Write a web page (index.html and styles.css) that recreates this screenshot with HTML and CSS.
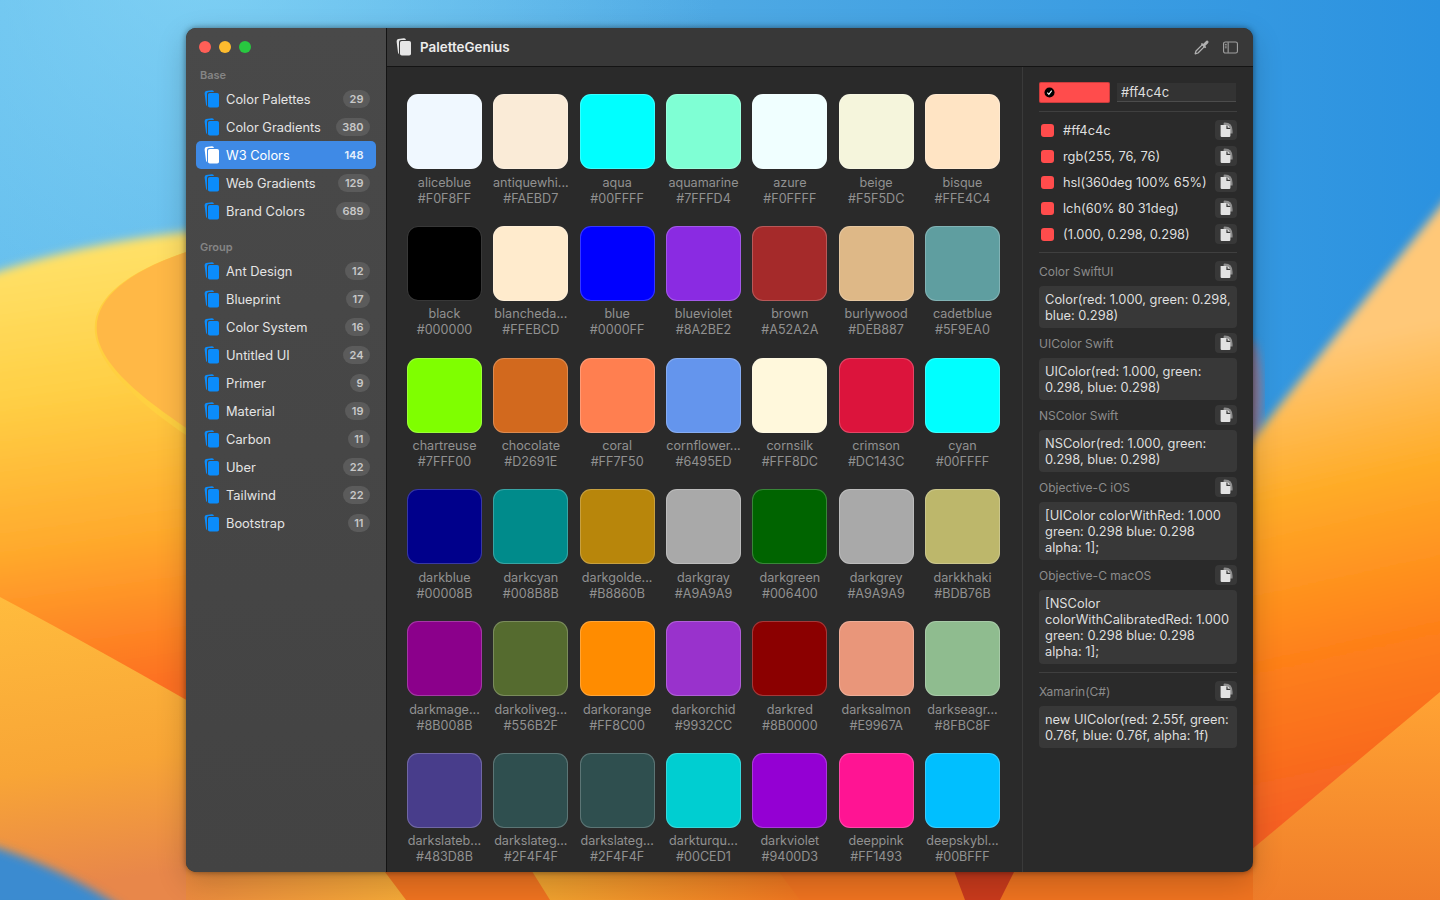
FILE: index.html
```html
<!DOCTYPE html>
<html lang="en">
<head>
    <meta charset="UTF-8">
    <meta name="viewport" content="width=device-width, initial-scale=1.0">
    <title>PaletteGenius</title>
    <link rel="stylesheet" href="styles.css">
</head>
<body>
    <!-- wallpaper -->
    <svg class="wallpaper" viewBox="0 0 1440 900" aria-hidden="true">
        <defs>
            <linearGradient id="sky" x1="0" y1="0" x2="1" y2="0">
                <stop offset="0" stop-color="#5fbaec"/>
                <stop offset="0.5" stop-color="#4ea9e4"/>
                <stop offset="1" stop-color="#2b92e0"/>
            </linearGradient>
            <radialGradient id="skyTop" gradientUnits="userSpaceOnUse" cx="200" cy="-60" r="520">
                <stop offset="0" stop-color="#8fdcf8" stop-opacity="0.7"/>
                <stop offset="1" stop-color="#8fdcf8" stop-opacity="0"/>
            </radialGradient>
            <linearGradient id="duneLeft" gradientUnits="userSpaceOnUse" x1="0" y1="270" x2="60" y2="700">
                <stop offset="0" stop-color="#ffe066"/>
                <stop offset="0.3" stop-color="#ffcf45"/>
                <stop offset="0.65" stop-color="#ffa92c"/>
                <stop offset="1" stop-color="#fd6f20"/>
            </linearGradient>
            <linearGradient id="bandLeft" gradientUnits="userSpaceOnUse" x1="0" y1="600" x2="40" y2="890">
                <stop offset="0" stop-color="#ffbb3d"/>
                <stop offset="0.6" stop-color="#f8a536"/>
                <stop offset="1" stop-color="#e8874a"/>
            </linearGradient>
            <linearGradient id="duneRight" gradientUnits="userSpaceOnUse" x1="1300" y1="350" x2="1400" y2="800">
                <stop offset="0" stop-color="#ffc878"/>
                <stop offset="0.3" stop-color="#ffac28"/>
                <stop offset="0.65" stop-color="#fe8019"/>
                <stop offset="1" stop-color="#f66022"/>
            </linearGradient>
            <linearGradient id="bandRight" gradientUnits="userSpaceOnUse" x1="1400" y1="700" x2="1400" y2="900">
                <stop offset="0" stop-color="#ffa233"/>
                <stop offset="1" stop-color="#f07d2a"/>
            </linearGradient>
            <linearGradient id="stripA" x1="0" y1="0" x2="1" y2="0">
                <stop offset="0" stop-color="#ea8a3e"/>
                <stop offset="1" stop-color="#f5aa38"/>
            </linearGradient>
            <linearGradient id="stripB" x1="0" y1="0" x2="1" y2="0">
                <stop offset="0" stop-color="#f0a530"/>
                <stop offset="1" stop-color="#ef7620"/>
            </linearGradient>
            <filter id="soft" x="-10%" y="-10%" width="120%" height="120%">
                <feGaussianBlur stdDeviation="5"/>
            </filter>
        </defs>
        <rect width="1440" height="900" fill="url(#sky)"/>
        <rect width="1440" height="500" fill="url(#skyTop)"/>
        <ellipse cx="1250" cy="395" rx="12" ry="55" fill="#b5707a" opacity="0.7" filter="url(#soft)"/>
        <path d="M-20 278 Q90 238 230 228 L230 920 L-20 920 Z" fill="url(#duneLeft)" filter="url(#soft)"/>
        <path d="M230 240 C150 258 90 290 95 333 C100 378 170 428 230 462 Z" fill="#ffd040"/>
        <path d="M230 240 C150 258 92 290 97 333 C102 375 170 418 230 456 Z" fill="#ffb846"/>
        <path d="M0 597 Q100 650 230 725 L230 900 L0 900 Z" fill="url(#bandLeft)"/>
        <path d="M-20 842 Q60 866 125 910 L-20 910 Z" fill="#3a8bd0" filter="url(#soft)"/>
        <path d="M1220 480 Q1340 330 1470 170 L1470 920 L1220 920 Z" fill="url(#duneRight)" filter="url(#soft)"/>
        <path d="M1220 876 L1440 692 L1440 900 L1220 900 Z" fill="url(#bandRight)"/>
        <rect x="186" y="860" width="1067" height="40" fill="#ef7320"/>
        <path d="M186 860 H376 L406 900 H186 Z" fill="url(#stripA)"/>
        <path d="M525 860 H770 L800 900 H550 Z" fill="url(#stripB)"/>
        <path d="M950 860 H1020 L1000 900 H965 Z" fill="#c93a1c"/>
    </svg>

    <!-- shared icons -->
    <svg class="icon-defs" aria-hidden="true">
        <symbol id="cards" viewBox="0 0 16 18">
            <path d="M.6 3.4 Q.5 1.5 2.2 1.1 L7.8 .3 Q9.6 .1 10 2 H5 Q3 2 3 4 V15 Q3 15.7 3.3 16.4 Q2.2 15.9 2 14.6 Z"/>
            <rect x="4" y="3" width="11" height="14.5" rx="1.8"/>
        </symbol>
        <symbol id="copy" viewBox="0 0 14 16">
            <path d="M4.6 3 V1.6 Q4.6 .6 5.8 .6 Q13.6 .6 13.6 9 V11.4 H11 V5 Z" fill="#8d8d8d"/>
            <path d="M1.6 3 H7.4 V7 H11.4 V13.8 Q11.4 15 10.2 15 H2.8 Q1.6 15 1.6 13.8 Z" fill="#e2e2e2"/>
            <path d="M8.6 3 L11.4 5.8 H8.6 Z" fill="#e2e2e2"/>
        </symbol>
    </svg>

    <div class="window">
        <aside class="sidebar">
            <div class="traffic">
                <span class="dot dot-red"></span>
                <span class="dot dot-yellow"></span>
                <span class="dot dot-green"></span>
            </div>
            <div class="side-label">Base</div>
            <ul class="side-list">
                <li class="side-item"><svg class="side-icon"><use href="#cards"/></svg><span class="side-name">Color Palettes</span><span class="badge">29</span></li>
                <li class="side-item"><svg class="side-icon"><use href="#cards"/></svg><span class="side-name">Color Gradients</span><span class="badge">380</span></li>
                <li class="side-item active"><svg class="side-icon"><use href="#cards"/></svg><span class="side-name">W3 Colors</span><span class="badge">148</span></li>
                <li class="side-item"><svg class="side-icon"><use href="#cards"/></svg><span class="side-name">Web Gradients</span><span class="badge">129</span></li>
                <li class="side-item"><svg class="side-icon"><use href="#cards"/></svg><span class="side-name">Brand Colors</span><span class="badge">689</span></li>
            </ul>
            <div class="side-label side-label-group">Group</div>
            <ul class="side-list">
                <li class="side-item"><svg class="side-icon"><use href="#cards"/></svg><span class="side-name">Ant Design</span><span class="badge">12</span></li>
                <li class="side-item"><svg class="side-icon"><use href="#cards"/></svg><span class="side-name">Blueprint</span><span class="badge">17</span></li>
                <li class="side-item"><svg class="side-icon"><use href="#cards"/></svg><span class="side-name">Color System</span><span class="badge">16</span></li>
                <li class="side-item"><svg class="side-icon"><use href="#cards"/></svg><span class="side-name">Untitled UI</span><span class="badge">24</span></li>
                <li class="side-item"><svg class="side-icon"><use href="#cards"/></svg><span class="side-name">Primer</span><span class="badge">9</span></li>
                <li class="side-item"><svg class="side-icon"><use href="#cards"/></svg><span class="side-name">Material</span><span class="badge">19</span></li>
                <li class="side-item"><svg class="side-icon"><use href="#cards"/></svg><span class="side-name">Carbon</span><span class="badge">11</span></li>
                <li class="side-item"><svg class="side-icon"><use href="#cards"/></svg><span class="side-name">Uber</span><span class="badge">22</span></li>
                <li class="side-item"><svg class="side-icon"><use href="#cards"/></svg><span class="side-name">Tailwind</span><span class="badge">22</span></li>
                <li class="side-item"><svg class="side-icon"><use href="#cards"/></svg><span class="side-name">Bootstrap</span><span class="badge">11</span></li>
            </ul>
        </aside>

        <main class="main">
            <header class="toolbar">
                <svg class="title-icon"><use href="#cards"/></svg>
                <span class="title">PaletteGenius</span>
                <div class="toolbar-actions">
                    <svg class="tool-icon" viewBox="0 0 16 16">
                        <path d="M1.2 14.8 L2 12 L8.4 5.6 L10.4 7.6 L4 14 Z" fill="none" stroke="#b0b0b0" stroke-width="1.3" stroke-linejoin="round"/>
                        <path d="M7.6 4 L9.4 4.8 L11.6 2.4 Q13 1 14.2 2 Q15.2 3.2 13.8 4.6 L11.4 6.8 L12.2 8.6 L11 9.2 L7 5.2 Z" fill="#b0b0b0"/>
                    </svg>
                    <svg class="tool-icon tool-icon-wide" viewBox="0 0 16 13">
                        <rect x="0.6" y="0.6" width="14.8" height="11.8" rx="2" fill="none" stroke="#a0a0a0" stroke-width="1.2"/>
                        <path d="M5.5 1 V12" stroke="#a0a0a0" stroke-width="1.2"/>
                        <path d="M2 3.2 H4 M2 5 H4 M2 6.8 H4" stroke="#a0a0a0"/>
                    </svg>
                </div>
            </header>

            <div class="panes">
                <section class="colors">
                    <div class="color-card"><div class="swatch" style="background:#F0F8FF"></div><div class="color-name">aliceblue</div><div class="color-hex">#F0F8FF</div></div>
                    <div class="color-card"><div class="swatch" style="background:#FAEBD7"></div><div class="color-name">antiquewhi...</div><div class="color-hex">#FAEBD7</div></div>
                    <div class="color-card"><div class="swatch" style="background:#00FFFF"></div><div class="color-name">aqua</div><div class="color-hex">#00FFFF</div></div>
                    <div class="color-card"><div class="swatch" style="background:#7FFFD4"></div><div class="color-name">aquamarine</div><div class="color-hex">#7FFFD4</div></div>
                    <div class="color-card"><div class="swatch" style="background:#F0FFFF"></div><div class="color-name">azure</div><div class="color-hex">#F0FFFF</div></div>
                    <div class="color-card"><div class="swatch" style="background:#F5F5DC"></div><div class="color-name">beige</div><div class="color-hex">#F5F5DC</div></div>
                    <div class="color-card"><div class="swatch" style="background:#FFE4C4"></div><div class="color-name">bisque</div><div class="color-hex">#FFE4C4</div></div>

                    <div class="color-card"><div class="swatch" style="background:#000000"></div><div class="color-name">black</div><div class="color-hex">#000000</div></div>
                    <div class="color-card"><div class="swatch" style="background:#FFEBCD"></div><div class="color-name">blancheda...</div><div class="color-hex">#FFEBCD</div></div>
                    <div class="color-card"><div class="swatch" style="background:#0000FF"></div><div class="color-name">blue</div><div class="color-hex">#0000FF</div></div>
                    <div class="color-card"><div class="swatch" style="background:#8A2BE2"></div><div class="color-name">blueviolet</div><div class="color-hex">#8A2BE2</div></div>
                    <div class="color-card"><div class="swatch" style="background:#A52A2A"></div><div class="color-name">brown</div><div class="color-hex">#A52A2A</div></div>
                    <div class="color-card"><div class="swatch" style="background:#DEB887"></div><div class="color-name">burlywood</div><div class="color-hex">#DEB887</div></div>
                    <div class="color-card"><div class="swatch" style="background:#5F9EA0"></div><div class="color-name">cadetblue</div><div class="color-hex">#5F9EA0</div></div>

                    <div class="color-card"><div class="swatch" style="background:#7FFF00"></div><div class="color-name">chartreuse</div><div class="color-hex">#7FFF00</div></div>
                    <div class="color-card"><div class="swatch" style="background:#D2691E"></div><div class="color-name">chocolate</div><div class="color-hex">#D2691E</div></div>
                    <div class="color-card"><div class="swatch" style="background:#FF7F50"></div><div class="color-name">coral</div><div class="color-hex">#FF7F50</div></div>
                    <div class="color-card"><div class="swatch" style="background:#6495ED"></div><div class="color-name">cornflower...</div><div class="color-hex">#6495ED</div></div>
                    <div class="color-card"><div class="swatch" style="background:#FFF8DC"></div><div class="color-name">cornsilk</div><div class="color-hex">#FFF8DC</div></div>
                    <div class="color-card"><div class="swatch" style="background:#DC143C"></div><div class="color-name">crimson</div><div class="color-hex">#DC143C</div></div>
                    <div class="color-card"><div class="swatch" style="background:#00FFFF"></div><div class="color-name">cyan</div><div class="color-hex">#00FFFF</div></div>

                    <div class="color-card"><div class="swatch" style="background:#00008B"></div><div class="color-name">darkblue</div><div class="color-hex">#00008B</div></div>
                    <div class="color-card"><div class="swatch" style="background:#008B8B"></div><div class="color-name">darkcyan</div><div class="color-hex">#008B8B</div></div>
                    <div class="color-card"><div class="swatch" style="background:#B8860B"></div><div class="color-name">darkgolde...</div><div class="color-hex">#B8860B</div></div>
                    <div class="color-card"><div class="swatch" style="background:#A9A9A9"></div><div class="color-name">darkgray</div><div class="color-hex">#A9A9A9</div></div>
                    <div class="color-card"><div class="swatch" style="background:#006400"></div><div class="color-name">darkgreen</div><div class="color-hex">#006400</div></div>
                    <div class="color-card"><div class="swatch" style="background:#A9A9A9"></div><div class="color-name">darkgrey</div><div class="color-hex">#A9A9A9</div></div>
                    <div class="color-card"><div class="swatch" style="background:#BDB76B"></div><div class="color-name">darkkhaki</div><div class="color-hex">#BDB76B</div></div>

                    <div class="color-card"><div class="swatch" style="background:#8B008B"></div><div class="color-name">darkmage...</div><div class="color-hex">#8B008B</div></div>
                    <div class="color-card"><div class="swatch" style="background:#556B2F"></div><div class="color-name">darkoliveg...</div><div class="color-hex">#556B2F</div></div>
                    <div class="color-card"><div class="swatch" style="background:#FF8C00"></div><div class="color-name">darkorange</div><div class="color-hex">#FF8C00</div></div>
                    <div class="color-card"><div class="swatch" style="background:#9932CC"></div><div class="color-name">darkorchid</div><div class="color-hex">#9932CC</div></div>
                    <div class="color-card"><div class="swatch" style="background:#8B0000"></div><div class="color-name">darkred</div><div class="color-hex">#8B0000</div></div>
                    <div class="color-card"><div class="swatch" style="background:#E9967A"></div><div class="color-name">darksalmon</div><div class="color-hex">#E9967A</div></div>
                    <div class="color-card"><div class="swatch" style="background:#8FBC8F"></div><div class="color-name">darkseagr...</div><div class="color-hex">#8FBC8F</div></div>

                    <div class="color-card"><div class="swatch" style="background:#483D8B"></div><div class="color-name">darkslateb...</div><div class="color-hex">#483D8B</div></div>
                    <div class="color-card"><div class="swatch" style="background:#2F4F4F"></div><div class="color-name">darkslateg...</div><div class="color-hex">#2F4F4F</div></div>
                    <div class="color-card"><div class="swatch" style="background:#2F4F4F"></div><div class="color-name">darkslateg...</div><div class="color-hex">#2F4F4F</div></div>
                    <div class="color-card"><div class="swatch" style="background:#00CED1"></div><div class="color-name">darkturqu...</div><div class="color-hex">#00CED1</div></div>
                    <div class="color-card"><div class="swatch" style="background:#9400D3"></div><div class="color-name">darkviolet</div><div class="color-hex">#9400D3</div></div>
                    <div class="color-card"><div class="swatch" style="background:#FF1493"></div><div class="color-name">deeppink</div><div class="color-hex">#FF1493</div></div>
                    <div class="color-card"><div class="swatch" style="background:#00BFFF"></div><div class="color-name">deepskybl...</div><div class="color-hex">#00BFFF</div></div>
                </section>

                <aside class="detail">
                    <div class="picker">
                        <div class="picker-color">
                            <svg class="picker-check" viewBox="0 0 12 12">
                                <circle cx="6" cy="6" r="5.5" fill="#000"/>
                                <path d="M3.6 6.2 L5.3 8 L8.4 4" fill="none" stroke="#fff" stroke-width="1.2"/>
                            </svg>
                        </div>
                        <input class="picker-input" type="text" value="#ff4c4c">
                    </div>
                    <div class="divider"></div>
                    <div class="formats">
                        <div class="format-row"><span class="format-dot"></span><span class="format-text">#ff4c4c</span><button class="copy-btn"><svg class="copy-icon"><use href="#copy"/></svg></button></div>
                        <div class="format-row"><span class="format-dot"></span><span class="format-text">rgb(255, 76, 76)</span><button class="copy-btn"><svg class="copy-icon"><use href="#copy"/></svg></button></div>
                        <div class="format-row"><span class="format-dot"></span><span class="format-text">hsl(360deg 100% 65%)</span><button class="copy-btn"><svg class="copy-icon"><use href="#copy"/></svg></button></div>
                        <div class="format-row"><span class="format-dot"></span><span class="format-text">lch(60% 80 31deg)</span><button class="copy-btn"><svg class="copy-icon"><use href="#copy"/></svg></button></div>
                        <div class="format-row"><span class="format-dot"></span><span class="format-text">(1.000, 0.298, 0.298)</span><button class="copy-btn"><svg class="copy-icon"><use href="#copy"/></svg></button></div>
                    </div>
                    <div class="divider"></div>
                    <div class="snippets">
                        <div class="snippet-head"><span>Color SwiftUI</span><button class="copy-btn"><svg class="copy-icon"><use href="#copy"/></svg></button></div>
                        <div class="snippet-code">Color(red: 1.000, green: 0.298,<br>blue: 0.298)</div>
                        <div class="snippet-head"><span>UIColor Swift</span><button class="copy-btn"><svg class="copy-icon"><use href="#copy"/></svg></button></div>
                        <div class="snippet-code">UIColor(red: 1.000, green:<br>0.298, blue: 0.298)</div>
                        <div class="snippet-head"><span>NSColor Swift</span><button class="copy-btn"><svg class="copy-icon"><use href="#copy"/></svg></button></div>
                        <div class="snippet-code">NSColor(red: 1.000, green:<br>0.298, blue: 0.298)</div>
                        <div class="snippet-head"><span>Objective-C iOS</span><button class="copy-btn"><svg class="copy-icon"><use href="#copy"/></svg></button></div>
                        <div class="snippet-code">[UIColor colorWithRed: 1.000<br>green: 0.298 blue: 0.298<br>alpha: 1];</div>
                        <div class="snippet-head"><span>Objective-C macOS</span><button class="copy-btn"><svg class="copy-icon"><use href="#copy"/></svg></button></div>
                        <div class="snippet-code">[NSColor<br>colorWithCalibratedRed: 1.000<br>green: 0.298 blue: 0.298<br>alpha: 1];</div>
                    </div>
                    <div class="divider"></div>
                    <div class="snippets">
                        <div class="snippet-head"><span>Xamarin(C#)</span><button class="copy-btn"><svg class="copy-icon"><use href="#copy"/></svg></button></div>
                        <div class="snippet-code">new UIColor(red: 2.55f, green:<br>0.76f, blue: 0.76f, alpha: 1f)</div>
                    </div>
                </aside>
            </div>
        </main>
    </div>
</body>
</html>
```

FILE: styles.css
```css
* {
    box-sizing: border-box;
}
html, body {
    margin: 0;
    height: 100%;
    overflow: hidden;
}
body {
    position: relative;
    padding: 28px 187px 28px 186px;
    font-family: Inter, "Noto Sans", sans-serif;
    font-size: 12.85px;
    color: #dedede;
    background-color: #55aee6;
}
.wallpaper {
    position: absolute;
    top: 0;
    left: 0;
    width: 1440px;
    height: 900px;
}
.icon-defs {
    position: absolute;
    width: 0;
    height: 0;
}
ul {
    list-style: none;
    margin: 0;
    padding: 0;
}

/* window */
.window {
    position: relative;
    display: flex;
    height: 844px;
    border-radius: 10px;
    overflow: hidden;
    background-color: #2a2a2a;
    box-shadow: 0 0 6px rgba(0, 0, 0, 0.45), 0 10px 30px rgba(0, 0, 0, 0.2);
}

/* sidebar */
.sidebar {
    width: 201px;
    flex-shrink: 0;
    background: linear-gradient(#494949, #434343);
    border-right: 1px solid #141414;
}
.traffic {
    display: flex;
    align-items: center;
    gap: 8px;
    height: 38px;
    margin-bottom: 1px;
    padding-left: 13px;
}
.dot {
    width: 12px;
    height: 12px;
    border-radius: 50%;
}
.dot-red {
    background-color: #ff5f57;
}
.dot-yellow {
    background-color: #febc2e;
}
.dot-green {
    background-color: #28c840;
}
.side-label {
    height: 16px;
    margin-bottom: 2px;
    padding-left: 14px;
    font-size: 11px;
    font-weight: 600;
    line-height: 16px;
    color: #858585;
}
.side-label-group {
    margin-top: 14px;
}
.side-item {
    display: flex;
    align-items: center;
    height: 28px;
    margin: 0 10px;
    padding: 0 6px 0 8px;
    border-radius: 5px;
    color: #e4e4e4;
}
.side-item.active {
    background-color: #3f8ae6;
    color: #fff;
}
.side-icon {
    width: 16px;
    height: 18px;
    margin-right: 6px;
    fill: #0b8cfb;
}
.active .side-icon {
    fill: #fff;
}
.side-name {
    flex: 1;
}
.badge {
    min-width: 18px;
    height: 18px;
    padding: 0 6.5px;
    border-radius: 9px;
    background-color: #5b5b5b;
    font-size: 11px;
    font-weight: 600;
    line-height: 18px;
    text-align: center;
    color: #c8c8c8;
}
.active .badge {
    background-color: transparent;
    color: #e6f0fc;
}

/* toolbar */
.main {
    flex: 1;
    display: flex;
    flex-direction: column;
    min-width: 0;
}
.toolbar {
    display: flex;
    align-items: center;
    height: 39px;
    flex-shrink: 0;
    padding: 0 15px 0 9px;
    background-color: #383838;
    border-bottom: 1px solid #141414;
}
.title-icon {
    width: 16px;
    height: 18px;
    margin-right: 8px;
    fill: #e6e6e6;
}
.title {
    font-size: 13.4px;
    font-weight: 600;
    color: #ececec;
}
.toolbar-actions {
    margin-left: auto;
    display: flex;
    align-items: center;
    gap: 13px;
}
.tool-icon {
    width: 16px;
    height: 16px;
}
.tool-icon-wide {
    width: 15px;
    height: 13px;
}

/* colour grid */
.panes {
    flex: 1;
    display: flex;
    min-height: 0;
}
.colors {
    flex: 1;
    display: grid;
    grid-template-columns: repeat(7, 75px);
    justify-content: space-between;
    align-content: start;
    row-gap: 19.25px;
    padding: 27px 22px 0 20px;
    overflow: hidden;
    font-size: 12.6px;
}
.color-card {
    display: flex;
    flex-direction: column;
    align-items: center;
    white-space: nowrap;
    line-height: 16px;
    color: #919191;
}
.swatch {
    width: 75px;
    height: 75px;
    margin-bottom: 5.5px;
    border-radius: 11px;
    box-shadow: inset 0 0 0 1px rgba(255, 255, 255, 0.22);
}

/* detail panel */
.detail {
    width: 231px;
    flex-shrink: 0;
    padding: 15px 16px 0;
    border-left: 1px solid #3a3a3a;
}
.picker {
    display: flex;
    align-items: center;
    gap: 7px;
    height: 21px;
}
.picker-color {
    display: flex;
    align-items: center;
    width: 71px;
    height: 21px;
    padding-left: 5px;
    border-radius: 2px;
    background-color: #ff4c4c;
    box-shadow: inset 0 0 0 1px rgba(0, 0, 0, 0.2);
}
.picker-check {
    width: 11px;
    height: 11px;
}
.picker-input {
    width: 119px;
    height: 19px;
    padding: 0 4px;
    border: none;
    border-bottom: 1px solid #4c4c4c;
    outline: none;
    background-color: #333;
    font-family: inherit;
    font-size: 13px;
    color: #dedede;
}
.divider {
    height: 1px;
    margin: 8px 0;
    background-color: #3f3f3f;
}
.formats {
    display: flex;
    flex-direction: column;
    gap: 6px;
}
.format-row {
    display: flex;
    align-items: center;
    height: 20px;
}
.format-dot {
    width: 13px;
    height: 13px;
    margin: 0 9px 0 2px;
    border-radius: 3px;
    background-color: #ff4c4c;
}
.format-text {
    flex: 1;
    white-space: nowrap;
}
.copy-btn {
    display: flex;
    align-items: center;
    justify-content: center;
    width: 22px;
    height: 20px;
    padding: 0;
    border: none;
    border-radius: 4px;
    background-color: #383838;
}
.copy-icon {
    width: 14px;
    height: 16px;
}
.snippets {
    display: flex;
    flex-direction: column;
    gap: 5px;
}
.snippet-head {
    display: flex;
    align-items: center;
    justify-content: space-between;
    height: 20px;
    font-size: 12px;
    color: #8c8c8c;
}
.snippet-code {
    padding: 6px 6px 4px;
    border-radius: 4px;
    background-color: #383838;
    line-height: 16px;
    white-space: nowrap;
}
```
